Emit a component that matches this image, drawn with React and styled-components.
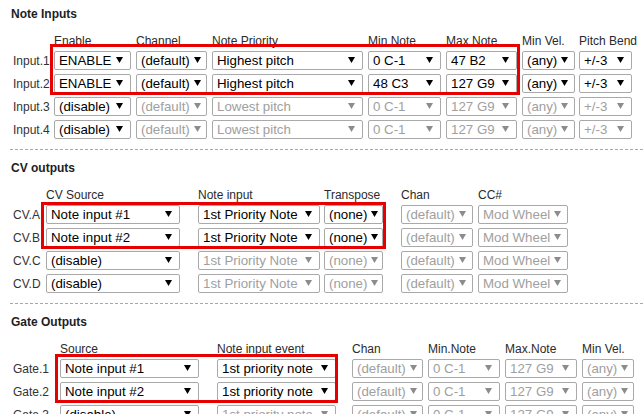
import React from "react";
import styled, { createGlobalStyle } from "styled-components";

const GlobalStyle = createGlobalStyle`
  html, body {
    margin: 0;
    padding: 0;
    background: #fff;
    overflow: hidden;
  }
  body {
    font-family: "Liberation Sans", Arial, sans-serif;
    color: #222;
  }
`;

// columns: [header, track width, select width]
const sections = [
  {
    title: "Note Inputs",
    label: 41,
    columns: [
      ["Enable", 82, 77],
      ["Channel", 76, 71],
      ["Note Priority", 156, 151],
      ["Min Note", 78, 73],
      ["Max Note", 76, 71],
      ["Min Vel.", 57, 53],
      ["Pitch Bend", 60, 53],
    ],
    rows: [
      { label: "Input.1", off: 7, cells: ["ENABLE", "(default)", "Highest pitch", "0 C-1", "47 B2", "(any)", "+/-3"] },
      { label: "Input.2", off: 7, cells: ["ENABLE", "(default)", "Highest pitch", "48 C3", "127 G9", "(any)", "+/-3"] },
      { label: "Input.3", off: 1, cells: ["(disable)", "(default)", "Lowest pitch", "0 C-1", "127 G9", "(any)", "+/-3"] },
      { label: "Input.4", off: 1, cells: ["(disable)", "(default)", "Lowest pitch", "0 C-1", "127 G9", "(any)", "+/-3"] },
    ],
    mark: { cols: "2 / 7", margin: "-7px 2px -2px -4px" },
  },
  {
    title: "CV outputs",
    label: 33,
    columns: [
      ["CV Source", 152, 134],
      ["Note input", 126, 122],
      ["Transpose", 77, 59],
      ["Chan", 77, 72],
      ["CC#", 100, 90],
    ],
    rows: [
      { label: "CV.A", off: 3, cells: ["Note input #1", "1st Priority Note", "(none)", "(default)", "Mod Wheel"] },
      { label: "CV.B", off: 3, cells: ["Note input #2", "1st Priority Note", "(none)", "(default)", "Mod Wheel"] },
      { label: "CV.C", off: 1, cells: ["(disable)", "1st Priority Note", "(none)", "(default)", "Mod Wheel"] },
      { label: "CV.D", off: 1, cells: ["(disable)", "1st Priority Note", "(none)", "(default)", "Mod Wheel"] },
    ],
    mark: { cols: "2 / 5", margin: "-3px 15px -2px -5px" },
  },
  {
    title: "Gate Outputs",
    label: 47,
    columns: [
      ["Source", 157, 139],
      ["Note input event", 135, 119],
      ["Chan", 76, 71],
      ["Min.Note", 77, 72],
      ["Max.Note", 77, 72],
      ["Min Vel.", 60, 52],
    ],
    rows: [
      { label: "Gate.1", off: 2, cells: ["Note input #1", "1st priority note", "(default)", "0 C-1", "127 G9", "(any)"] },
      { label: "Gate.2", off: 2, cells: ["Note input #2", "1st priority note", "(default)", "0 C-1", "127 G9", "(any)"] },
      { label: "Gate.3", off: 1, cells: ["(disable)", "1st priority note", "(default)", "0 C-1", "127 G9", "(any)"] },
      { label: "Gate.4", off: 1, cells: ["(disable)", "1st priority note", "(default)", "0 C-1", "127 G9", "(any)"] },
    ],
    mark: { cols: "2 / 4", margin: "-5px 14px -2px -5px" },
  },
];

const Arrow = ({ off }) => (
  <ArrowSvg width="7" height="6" viewBox="0 0 7 6">
    <polygon points="0,0 7,0 3.5,6" fill={off ? "#8c8c8c" : "#000"} />
  </ArrowSvg>
);

const App = () => {
  return (
    <Page>
      <GlobalStyle />
      {sections.map((s, i) => (
        <Section key={s.title}>
          {i > 0 && <Divider />}
          <Title>{s.title}</Title>
          <Grid $cols={[s.label, ...s.columns.map((c) => c[1])].map((w) => w + "px").join(" ")}>
            {s.columns.map((c, ci) => (
              <Head key={c[0]} $c={ci + 2}>
                {c[0]}
              </Head>
            ))}
            {s.rows.map((row, ri) => (
              <React.Fragment key={row.label}>
                <RowLabel $r={ri + 2}>{row.label}</RowLabel>
                {row.cells.map((text, ci) => {
                  const off = ci >= row.off;
                  return (
                    <Select key={ci} $r={ri + 2} $c={ci + 2} $w={s.columns[ci][2]} $off={off}>
                      <span>{text}</span>
                      <Arrow off={off} />
                    </Select>
                  );
                })}
              </React.Fragment>
            ))}
            <Highlight $cols={s.mark.cols} $margin={s.mark.margin} />
          </Grid>
        </Section>
      ))}
    </Page>
  );
};

const Page = styled.div`
  padding: 7px 0 0 10px;
`;

const Section = styled.section`
  display: flex;
  flex-direction: column;
`;

const Divider = styled.div`
  margin: 10px 0 11px;
  border-top: 1px dashed #a8a8a8;
`;

const Title = styled.h2`
  margin: 0 0 14px 1px;
  font-size: 12px;
  line-height: 14px;
  font-weight: 700;
  color: #1e1e1e;
`;

const Grid = styled.div`
  display: grid;
  margin-left: 3px;
  grid-template-columns: ${(p) => p.$cols};
  grid-template-rows: 12px;
  grid-auto-rows: 19px;
  row-gap: 4px;
  align-items: center;
`;

const Head = styled.div`
  grid-row: 1;
  grid-column: ${(p) => p.$c};
  font-size: 12px;
  line-height: 12px;
  color: #2a2a2a;
  white-space: nowrap;
`;

const RowLabel = styled.div`
  grid-row: ${(p) => p.$r};
  grid-column: 1;
  font-size: 12px;
  color: #333;
  white-space: nowrap;
`;

const Select = styled.div`
  grid-row: ${(p) => p.$r};
  grid-column: ${(p) => p.$c};
  box-sizing: border-box;
  width: ${(p) => p.$w}px;
  height: 19px;
  display: flex;
  align-items: center;
  justify-content: space-between;
  gap: 4px;
  padding: 0 7px 0 4px;
  border: 1px solid #a9a9a9;
  border-radius: 2px;
  background: #fff;
  font-size: 13.3px;
  color: ${(p) => (p.$off ? "#a0a0a0" : "#000")};
  white-space: nowrap;
  overflow: hidden;
`;

const ArrowSvg = styled.svg`
  flex: none;
  margin-bottom: 2px;
`;

const Highlight = styled.div`
  grid-row: 2 / 4;
  grid-column: ${(p) => p.$cols};
  align-self: stretch;
  justify-self: stretch;
  margin: ${(p) => p.$margin};
  box-sizing: border-box;
  border: 3px solid #e60000;
  position: relative;
  z-index: 1;
  pointer-events: none;
`;

export default App;
